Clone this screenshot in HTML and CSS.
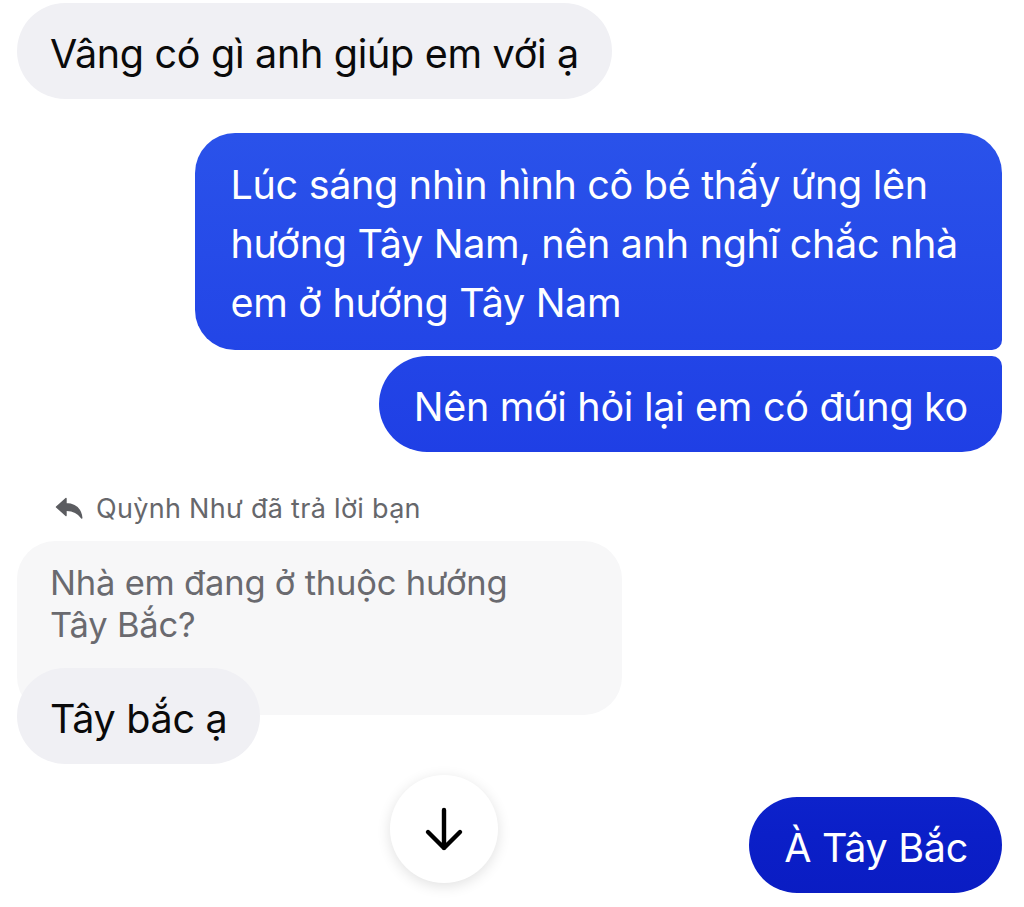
FILE: index.html
```html
<!DOCTYPE html>
<html lang="vi">
<head>
<meta charset="utf-8">
<title>Chat</title>
<link rel="stylesheet" href="styles.css">
</head>
<body>
<div class="chat">
  <div class="bubble in first">Vâng có gì anh giúp em với ạ</div>

  <div class="bubble out multi top">Lúc sáng nhìn hình cô bé thấy ứng lên<br>hướng Tây Nam, nên anh nghĩ chắc nhà<br>em ở hướng Tây Nam</div>
  <div class="bubble out bottom">Nên mới hỏi lại em có đúng ko</div>

  <div class="reply-label">
    <svg class="reply-icon" width="28" height="22" viewBox="0 0 28 22" aria-hidden="true">
      <path d="M11 1.5 L1.5 10 L11 18.5 L11 13.2 C18 13 23 15.5 26.8 21 C26 13 21 7.2 11 6.8 Z" fill="#5b5c60" stroke="#5b5c60" stroke-width="1.4" stroke-linejoin="round"/>
    </svg>
    <span>Quỳnh Như đã trả lời bạn</span>
  </div>
  <div class="quoted">Nhà em đang ở thuộc hướng<br>Tây Bắc?</div>
  <div class="bubble in reply">Tây bắc ạ</div>

  <div class="bubble out last">À Tây Bắc</div>
</div>

<button class="scroll-down" aria-label="Cuộn xuống">
  <svg width="40" height="46" viewBox="0 0 40 46" aria-hidden="true">
    <path d="M20 4 V42 M4 26 L20 42 L36 26" fill="none" stroke="#000" stroke-width="4.4" stroke-linecap="round" stroke-linejoin="round"/>
  </svg>
</button>
</body>
</html>
```

FILE: styles.css
```css
html, body {
  margin: 0;
  padding: 0;
  background: #ffffff;
}

body {
  width: 1024px;
  height: 907px;
  overflow: hidden;
  position: relative;
  font-family: Inter, "Noto Sans", "Liberation Sans", sans-serif;
}

.chat {
  display: flex;
  flex-direction: column;
  padding: 3px 22px 0 17px;
}

.bubble {
  font-size: 39.5px;
  line-height: 60px;
  padding: 21px 33px 15px;
  border-radius: 48px;
  white-space: nowrap;
  letter-spacing: -0.3px;
}

.in {
  align-self: flex-start;
  background: #f0f0f4;
  color: #0a0a0a;
}

.out {
  align-self: flex-end;
  color: #ffffff;
  background: linear-gradient(180deg, #2d5bed 0%, #2a52ea 15%, #1f3fe5 50%, #0b1fc8 92%, #0a1cc2 100%);
  background-attachment: fixed;
  padding-left: 35px;
  padding-right: 34px;
}

.multi {
  line-height: 59px;
  padding-top: 23px;
  padding-bottom: 17px;
  padding-right: 44px;
}

.top {
  margin-top: 34px;
  border-radius: 40px 40px 10px 40px;
}

.bottom {
  margin-top: 6px;
  border-radius: 48px 10px 40px 48px;
}

.reply-label {
  display: flex;
  align-items: center;
  gap: 13px;
  margin-top: 42px;
  margin-left: 38px;
  height: 28px;
  font-size: 27px;
  color: #66676b;
  letter-spacing: 0.3px;
}

.reply-icon {
  flex: none;
}

.quoted {
  align-self: flex-start;
  width: 539px;
  margin-top: 19px;
  padding: 21px 33px 69px;
  background: #f7f7f8;
  border-radius: 38px;
  font-size: 34.5px;
  line-height: 42px;
  color: #6a6a6f;
  letter-spacing: -0.2px;
}

.reply {
  margin-top: -47px;
}

.last {
  margin-top: 33px;
  border-radius: 48px;
}

.scroll-down {
  position: absolute;
  left: 390px;
  top: 775px;
  width: 108px;
  height: 108px;
  border: none;
  border-radius: 50%;
  background: #ffffff;
  box-shadow: 0 3px 14px rgba(0, 0, 0, 0.12);
  display: flex;
  align-items: center;
  justify-content: center;
  padding: 0;
}
```
